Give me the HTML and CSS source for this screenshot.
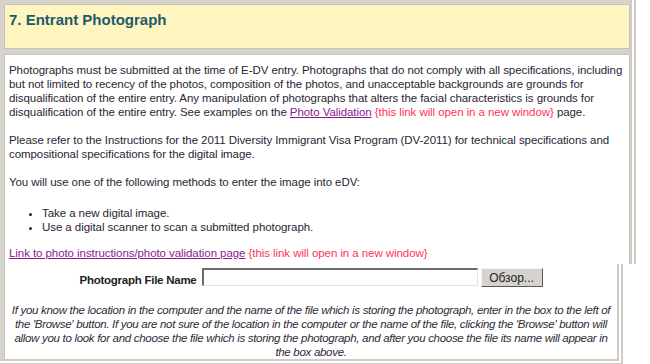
FILE: index.html
```html
<!DOCTYPE html>
<html lang="en">
<head>
    <meta charset="UTF-8">
    <title>Entrant Photograph</title>
    <link rel="stylesheet" href="styles.css">
</head>
<body>
    <!-- Section header and instructions -->
    <div class="frame frame-top">
        <div class="section-head">
            <h2>7. Entrant Photograph</h2>
        </div>
        <div class="section-body">
            <p>Photographs must be submitted at the time of E-DV entry. Photographs that do not comply with all specifications, including but not limited to recency of the photos, composition of the photos, and unacceptable backgrounds are grounds for disqualification of the entire entry. Any manipulation of photographs that alters the facial characteristics is grounds for disqualification of the entire entry. See examples on the <a href="#">Photo Validation</a> <span class="new-window">{this link will open in a new window}</span> page.</p>
            <p>Please refer to the Instructions for the 2011 Diversity Immigrant Visa Program (DV-2011) for technical specifications and compositional specifications for the digital image.</p>
            <p>You will use one of the following methods to enter the image into eDV:</p>
            <ul>
                <li>Take a new digital image.</li>
                <li>Use a digital scanner to scan a submitted photograph.</li>
            </ul>
            <p><a href="#">Link to photo instructions/photo validation page</a> <span class="new-window">{this link will open in a new window}</span></p>
        </div>
    </div>

    <!-- File upload -->
    <div class="frame frame-bottom">
        <div class="section-body upload">
            <div class="file-row">
                <label class="file-label">Photograph File Name</label>
                <span class="file-box"></span>
                <button class="btn-browse">Обзор...</button>
            </div>
            <p class="hint">If you know the location in the computer and the name of the file which is storing the photograph, enter in the box to the left of the 'Browse' button. If you are not sure of the location in the computer or the name of the file, clicking the 'Browse' button will allow you to look for and choose the file which is storing the photograph, and after you choose the file its name will appear in the box above.</p>
        </div>
    </div>
</body>
</html>
```

FILE: styles.css
```css
/* General Page Styling */
body {
    margin: 0;
    background: #fff;
    font-family: "Liberation Sans", Arial, sans-serif;
    font-size: 11.5px;
    letter-spacing: -0.07px;
    line-height: 14px;
    color: #2b2533;
}

/* Grey frames round the sections */
.frame {
    background: #d6d3cd;
    background-clip: padding-box;
    border-right: 6px double #d0ccc5;
    padding-left: 4px;
}

.frame-top {
    width: 626px;
    padding-top: 4px;
}

.frame-bottom {
    width: 613px;
    border-bottom: 6px double #d0ccc5;
}

/* Yellow header */
.section-head {
    height: 45px;
    box-sizing: border-box;
    background: #fff5c1;
    border: 1px solid #c9c5bd;
    padding: 6px 4px;
    margin-bottom: 5px;
}

.section-head h2 {
    margin: 0;
    font-size: 15px;
    line-height: 18px;
    letter-spacing: 0;
    color: #1d5a6c;
}

/* White body */
.section-body {
    background: #fff;
    border: 1px solid #c9c5bd;
    border-bottom: none;
    padding: 8px 4px 4px;
}

.section-body p {
    margin: 0 0 14px;
}

.section-body p:last-child {
    margin-bottom: 0;
}

.section-body ul {
    margin: 17px 0 12px;
    padding-left: 33px;
}

a {
    color: #8a1a8c;
}

.new-window {
    color: #ff3358;
}

/* Upload row */
.upload {
    border-top: none;
    border-right: none;
    padding: 4px 4px 0;
}

.file-row {
    display: flex;
    justify-content: center;
    align-items: flex-start;
}

.file-label {
    font-weight: bold;
    letter-spacing: -0.25px;
    color: #222;
    margin-top: 5px;
    margin-right: 5px;
}

.file-box {
    width: 276px;
    height: 18px;
    box-sizing: border-box;
    background: #fff;
    border-top: 2px solid #6c6c6c;
    border-left: 2px solid #6c6c6c;
    border-bottom: 1px solid #e4e2de;
    border-right: 1px solid #e4e2de;
    margin-right: 3px;
}

.btn-browse {
    width: 62px;
    height: 19px;
    padding: 0;
    font-family: "Liberation Sans", Arial, sans-serif;
    font-size: 12px;
    color: #222;
    background: #d6d3cd;
    border: 1px solid;
    border-color: #f4f3f0 #5a5a5a #5a5a5a #f4f3f0;
}

.hint {
    font-style: italic;
    letter-spacing: -0.3px;
    text-align: center;
    color: #302a38;
    margin-top: 16px !important;
}
```
